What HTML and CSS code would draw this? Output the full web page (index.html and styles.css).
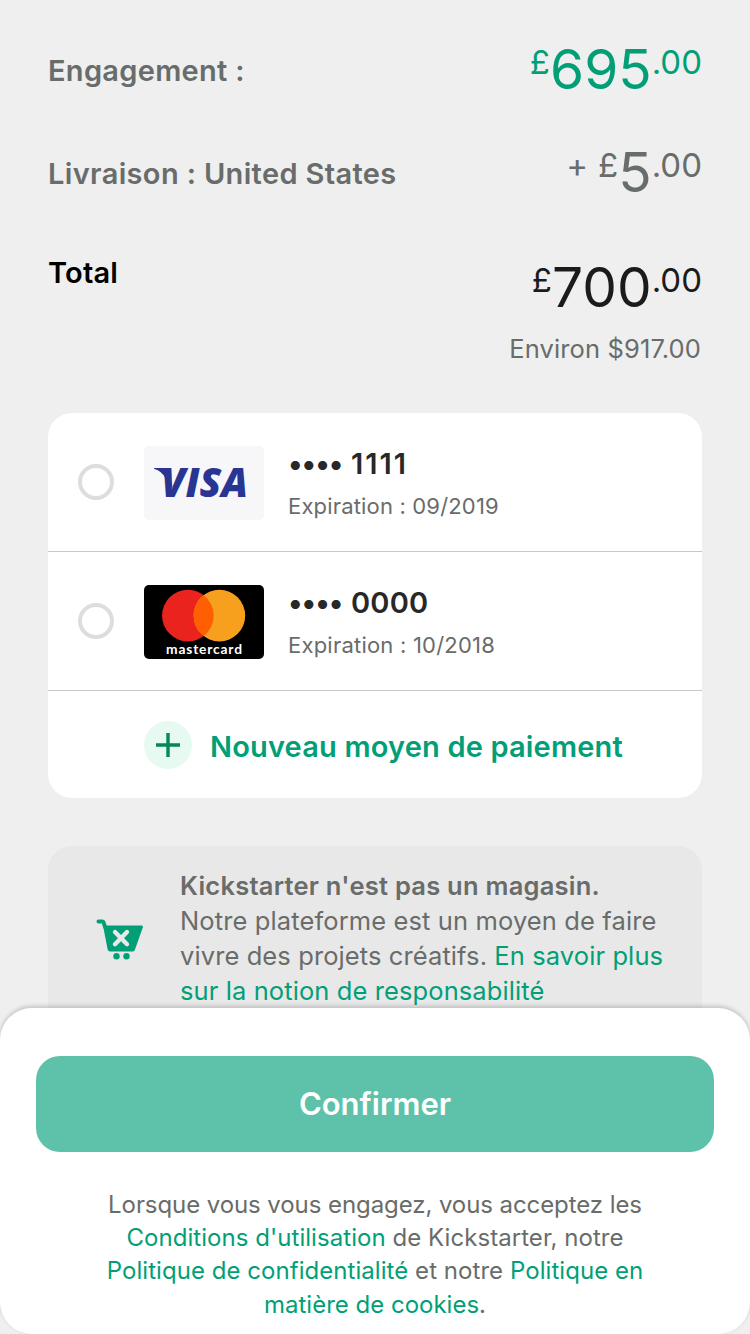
FILE: index.html
```html
<!DOCTYPE html>
<html lang="fr">
<head>
<meta charset="utf-8">
<title>Kickstarter</title>
<link rel="stylesheet" href="styles.css">
</head>
<body>
<main class="screen">
  <section class="summary">
    <div class="row"><span class="label engagement">Engagement :</span><span class="price green"><span class="minor">£</span><span class="major">695</span><span class="minor">.00</span></span></div>
    <div class="row"><span class="label shipping">Livraison : United States</span><span class="price"><span class="minor plus">+</span><span class="minor">£</span><span class="major">5</span><span class="minor">.00</span></span></div>
    <div class="row row-total"><span class="label total">Total</span><span class="price black"><span class="minor">£</span><span class="major">700</span><span class="minor">.00</span></span></div>
    <div class="approx">Environ $917.00</div>
  </section>

  <section class="cards">
    <div class="card">
      <span class="radio"></span>
      <svg class="brand" viewBox="0 0 120 74" role="img" aria-label="Visa">
        <rect width="120" height="74" rx="5" fill="#f7f7fa"/>
        <text class="visa" x="17" y="51" textLength="87" lengthAdjust="spacingAndGlyphs">VISA</text>
        <path d="M10 22H22.5Q25 22 25.6 25L28.5 42L22 33Q18 25 10 22.8Z" fill="#283593"/>
      </svg>
      <div class="details"><div class="number"><span class="dots">••••</span><span class="ones">1111</span></div><div class="expiry">Expiration : 09/2019</div></div>
    </div>
    <div class="card">
      <span class="radio"></span>
      <svg class="brand" viewBox="0 0 120 74" role="img" aria-label="Mastercard">
        <rect width="120" height="74" rx="5" fill="#000"/>
        <circle cx="43.9" cy="30.6" r="25.8" fill="#eb231e"/>
        <circle cx="75.4" cy="30.6" r="25.8" fill="#f7a01e"/>
        <path d="M59.65 10.16A25.8 25.8 0 0 1 59.65 51.04A25.8 25.8 0 0 1 59.65 10.16Z" fill="#ff5f00"/>
        <text class="mc" x="22" y="69.4" textLength="76" lengthAdjust="spacing">mastercard</text>
      </svg>
      <div class="details"><div class="number"><span class="dots">••••</span><span class="zeros">0000</span></div><div class="expiry later">Expiration : 10/2018</div></div>
    </div>
    <div class="add">
      <svg class="add-icon" viewBox="0 0 48 48"><circle cx="24" cy="24" r="24" fill="#e6faf1"/><path d="M12 24H36M24 12V36" stroke="#038858" stroke-width="3.4"/></svg>
      <span class="add-label">Nouveau moyen de paiement</span>
    </div>
  </section>

  <section class="notice">
    <svg class="cart" viewBox="0 0 48 42">
      <path d="M2.5 2.5H6Q7.4 2.5 7.8 4L9 8" fill="none" stroke="#029f77" stroke-width="4" stroke-linecap="round" stroke-linejoin="round"/>
      <path d="M7 6.5H45.5Q47.5 6.5 46.8 8.5L38.8 31Q38.2 32.5 36.5 32.5H14Q12.2 32.5 11.7 30.8Z" fill="#029f77"/>
      <path d="M19 13L31 25.2M31 13L19 25.2" stroke="#e8e8e8" stroke-width="4.4" stroke-linecap="round"/>
      <circle cx="20.5" cy="37.3" r="3.2" fill="#029f77"/><circle cx="30.5" cy="37.3" r="3.2" fill="#029f77"/>
    </svg>
    <div class="notice-text">
      <div><b class="n1">Kickstarter n'est pas un magasin.</b></div>
      <div><span class="n2">Notre plateforme est un moyen de faire</span></div>
      <div><span class="n3">vivre des projets créatifs. <a>En savoir plus</a></span></div>
      <div><a class="n4">sur la notion de responsabilité</a></div>
    </div>
  </section>
</main>

<footer class="sheet">
  <button class="confirm"><span>Confirmer</span></button>
  <div class="legal">
    <div><span class="l1">Lorsque vous vous engagez, vous acceptez les</span></div>
    <div><span class="l2"><a>Conditions d'utilisation</a> de Kickstarter, notre</span></div>
    <div><span class="l3"><a>Politique de confidentialité</a> et notre <a>Politique en</a></span></div>
    <div><span class="l4"><a>matière de cookies</a>.</span></div>
  </div>
</footer>
</body>
</html>
```
FILE: styles.css
```css
* { box-sizing: border-box; }
body {
  margin: 0;
  width: 750px;
  height: 1334px;
  overflow: hidden;
  background: #efefef;
  color: #686c6a;
  font-family: Inter, "Liberation Sans", sans-serif;
  font-kerning: normal;
  display: flex;
  flex-direction: column;
}
a, .green { color: #029f77; }
.screen { height: 1008px; flex: none; padding: 36px 48px 0; overflow: hidden; }
.summary { height: 377px; }
.row { display: flex; justify-content: space-between; height: 66px; margin-bottom: 37px; line-height: 66px; white-space: nowrap; }
.label { font-size: 29px; font-weight: 600; padding-top: 1.5px; }
.engagement { letter-spacing: .3px; }
.shipping { letter-spacing: .35px; }
.row-total { margin: 49px 0 11px; }
.total { color: #000; line-height: 37px; padding-top: 0; letter-spacing: .2px; }
.price { font-size: 55px; }
.minor { font-size: 33px; line-height: 0; vertical-align: 15px; }
.plus { margin-right: 10px; }
.black { color: #1b1b1b; }
.approx { font-size: 25.5px; line-height: 36px; text-align: right; letter-spacing: .12px; padding-right: 1px; }

.cards { height: 385px; background: #fff; border-radius: 24px; overflow: hidden; }
.card { height: 139px; border-bottom: 1px solid #c7c7c7; display: flex; align-items: center; padding-left: 30px; }
.radio { width: 36px; height: 36px; border: 4px solid #dcdedd; border-radius: 50%; margin-right: 30px; }
.brand { width: 120px; height: 74px; margin-top: 1px; margin-right: 24px; }
.visa { font: italic 800 41px "Open Sans", sans-serif; fill: #283593; }
.mc { font: 700 13.8px Lato, sans-serif; fill: #fff; }
.details { white-space: nowrap; }
.number { font-size: 29px; font-weight: 600; color: #282828; line-height: 44px; height: 43px; margin-top: 5px; display: flex; }
.dots { width: 63px; letter-spacing: -1px; }
.ones { letter-spacing: 2px; }
.zeros { letter-spacing: .2px; }
.expiry { font-size: 22px; line-height: 42px; letter-spacing: .17px; }
.later { letter-spacing: .22px; }
.add { height: 107px; display: flex; align-items: center; padding-left: 96px; gap: 18px; }
.add-icon { width: 48px; height: 48px; }
.add-label { color: #029f77; font-size: 29px; font-weight: 600; margin-top: 4px; white-space: nowrap; letter-spacing: .17px; }

.notice { margin-top: 48px; height: 190px; background: #e8e8e8; border-radius: 24px 24px 0 0; display: flex; padding: 22px 0 0 48px; font-size: 25.5px; line-height: 35px; white-space: nowrap; }
.cart { width: 48px; height: 42px; margin: 51px 36px 0 0; }
.notice-text b { font-weight: 600; }
.n1 { letter-spacing: .24px; }
.n2 { letter-spacing: .12px; }
.n3, .n4 { letter-spacing: .1px; }

.sheet { height: 326px; flex: none; background: #fff; border-radius: 32px; box-shadow: 0 -2px 4px rgba(0, 0, 0, .18); padding: 48px 36px 0; z-index: 1; }
.confirm { display: block; width: 100%; height: 96px; border: 0; border-radius: 24px; background: #5ec1a9; color: #fff; font: 600 31px/96px Inter, sans-serif; padding: 0; }
.legal { margin-top: 36px; text-align: center; font-size: 24px; line-height: 33.2px; white-space: nowrap; }
.l1 { letter-spacing: -.08px; }
.l2 { letter-spacing: .05px; }
.l3 { letter-spacing: .05px; }
```
